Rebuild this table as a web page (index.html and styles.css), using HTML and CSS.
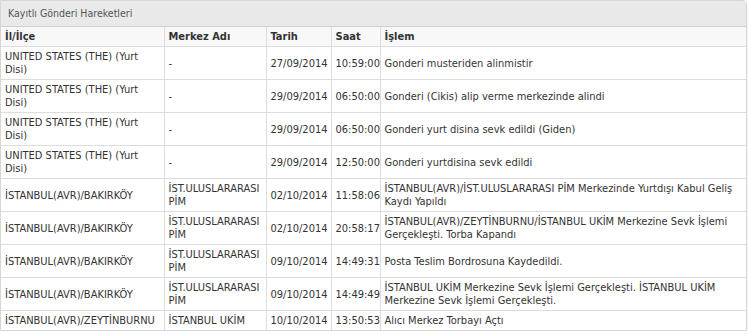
FILE: index.html
```html
<!DOCTYPE html>
<html>
<head>
<meta charset="utf-8">
<link rel="stylesheet" href="styles.css">
</head>
<body>
<div class="panel">
  <div class="panel-title">Kayıtlı Gönderi Hareketleri</div>
  <table class="moves">
    <colgroup>
      <col class="c1"><col class="c2"><col class="c3"><col class="c4"><col class="c5">
    </colgroup>
    <thead>
      <tr><th>İl/İlçe</th><th>Merkez Adı</th><th>Tarih</th><th>Saat</th><th>İşlem</th></tr>
    </thead>
    <tbody>
      <tr><td>UNITED STATES (THE) (Yurt Disi)</td><td>-</td><td>27/09/2014</td><td>10:59:00</td><td>Gonderi musteriden alinmistir</td></tr>
      <tr><td>UNITED STATES (THE) (Yurt Disi)</td><td>-</td><td>29/09/2014</td><td>06:50:00</td><td>Gonderi (Cikis) alip verme merkezinde alindi</td></tr>
      <tr><td>UNITED STATES (THE) (Yurt Disi)</td><td>-</td><td>29/09/2014</td><td>06:50:00</td><td>Gonderi yurt disina sevk edildi (Giden)</td></tr>
      <tr><td>UNITED STATES (THE) (Yurt Disi)</td><td>-</td><td>29/09/2014</td><td>12:50:00</td><td>Gonderi yurtdisina sevk edildi</td></tr>
      <tr><td>İSTANBUL(AVR)/BAKIRKÖY</td><td>İST.ULUSLARARASI PİM</td><td>02/10/2014</td><td>11:58:06</td><td>İSTANBUL(AVR)/İST.ULUSLARARASI PİM Merkezinde Yurtdışı Kabul Geliş Kaydı Yapıldı</td></tr>
      <tr><td>İSTANBUL(AVR)/BAKIRKÖY</td><td>İST.ULUSLARARASI PİM</td><td>02/10/2014</td><td>20:58:17</td><td>İSTANBUL(AVR)/ZEYTİNBURNU/İSTANBUL UKİM Merkezine Sevk İşlemi Gerçekleşti. Torba Kapandı</td></tr>
      <tr><td>İSTANBUL(AVR)/BAKIRKÖY</td><td>İST.ULUSLARARASI PİM</td><td>09/10/2014</td><td>14:49:31</td><td>Posta Teslim Bordrosuna Kaydedildi.</td></tr>
      <tr><td>İSTANBUL(AVR)/BAKIRKÖY</td><td>İST.ULUSLARARASI PİM</td><td>09/10/2014</td><td>14:49:49</td><td>İSTANBUL UKİM Merkezine Sevk İşlemi Gerçekleşti. İSTANBUL UKİM Merkezine Sevk İşlemi Gerçekleşti.</td></tr>
      <tr><td>İSTANBUL(AVR)/ZEYTİNBURNU</td><td>İSTANBUL UKİM</td><td>10/10/2014</td><td>13:50:53</td><td>Alıcı Merkez Torbayı Açtı</td></tr>
    </tbody>
  </table>
</div>
</body>
</html>
```

FILE: styles.css
```css
html, body {
  margin: 0;
  padding: 0;
  background: #ffffff;
}
body {
  font-family: "DejaVu Sans Condensed", "DejaVu Sans", sans-serif;
  font-size: 11px;
  color: #333333;
}
.panel {
  width: 745px;
  border: 1px solid #d6d6d6;
  border-top-right-radius: 4px;
  box-shadow: 0 2px 2px rgba(0,0,0,0.12);
}
.panel-title {
  height: 25px;
  line-height: 25px;
  padding-left: 7px;
  background: #e9e9e9;
  border-bottom: 1px solid #d0d0d0;
  color: #555555;
  font-size: 10.5px;
}
.moves {
  width: 100%;
  border-collapse: collapse;
  table-layout: fixed;
}
.c1 { width: 163px; }
.c2 { width: 102px; }
.c3 { width: 65px; }
.c4 { width: 49px; }
.moves th, .moves td {
  border: 1px solid #dddddd;
  text-align: left;
  vertical-align: middle;
  padding: 3px 4px;
  line-height: 13px;
}
.moves tr > :first-child { border-left: none; }
.moves tr > :last-child { border-right: none; }
.moves thead th {
  background: #f8f8f8;
  font-weight: bold;
  font-size: 11px;
  height: 13px;
  padding-top: 3px;
  padding-bottom: 3px;
  border-top: none;
}
.moves tbody tr:last-child td { border-bottom: none; }
```
